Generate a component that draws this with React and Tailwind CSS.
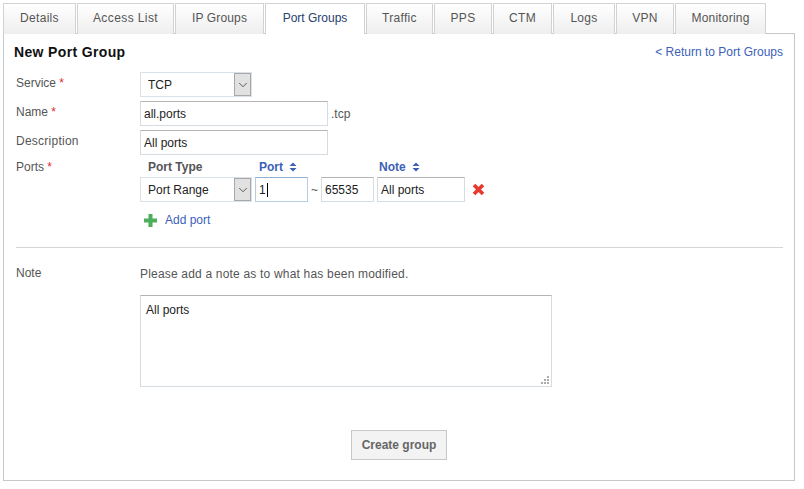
import { ChevronDown } from "lucide-react";

const tabs = [
  { label: "Details", width: "w-[73px] tracking-[0.3px]" },
  { label: "Access List", width: "w-[97px] tracking-[0.4px]" },
  { label: "IP Groups", width: "w-[89px] tracking-[0.15px]" },
  { label: "Port Groups", width: "w-[100px]", active: true },
  { label: "Traffic", width: "w-[67px] tracking-[0.3px]" },
  { label: "PPS", width: "w-[58px] tracking-[0.3px]" },
  { label: "CTM", width: "w-[59px] tracking-[0.3px]" },
  { label: "Logs", width: "w-[62px] tracking-[0.3px]" },
  { label: "VPN", width: "w-[58px] tracking-[0.3px]" },
  { label: "Monitoring", width: "w-[91px] tracking-[0.2px]" },
];

function Req() {
  return <span className="text-[#e02b2b]"> *</span>;
}

function FakeSelect({ value, width }) {
  return (
    <div className={`flex h-[25px] ${width} items-stretch border border-[#dbe1e8] bg-white`}>
      <div className="flex-1 pl-[7px] leading-[24px] text-[#222]">{value}</div>
      <div className="flex w-[17px] items-center justify-center border border-[#a8a8a8] bg-[#e1e1e1]">
        <ChevronDown size={14} strokeWidth={1.5} className="text-[#444]" />
      </div>
    </div>
  );
}

function Input({ value, width, children }) {
  return (
    <div className={`flex h-[25px] ${width} items-center border border-[#d5dce4] border-t-[#b4b4b4] bg-white pl-[3px] text-[#222]`}>
      {value}
      {children}
    </div>
  );
}

function SortHead({ label, width }) {
  return (
    <div className={`flex ${width} items-center font-bold text-[#3d5fb8]`}>
      {label}
      <svg width="8" height="10" viewBox="0 0 8 10" className="ml-[6px]">
        <path d="M4 0.5L7.5 4H0.5Z M4 9.5L0.5 6H7.5Z" fill="#3d5fb8" />
      </svg>
    </div>
  );
}

export default function App() {
  return (
    <div className="h-[489px] w-[804px] bg-white pl-[3px] pt-[3px] font-['Liberation_Sans',Arial,sans-serif] text-[12px] text-[#555]">
      <div className="flex gap-[1px]">
        {tabs.map((t) => (
          <div
            key={t.label}
            className={`-mb-[1px] flex h-[31px] items-center justify-center border border-b-0 border-[#d2d2d2] pb-[3px] ${t.width} ${
              t.active
                ? "relative z-10 bg-white text-[#27406e]"
                : "bg-gradient-to-b from-white to-[#eeeeee] text-[#555]"
            }`}
          >
            {t.label}
          </div>
        ))}
      </div>

      <div className="h-[448px] w-[792px] border border-[#c8c8c8] pl-[10px] pr-[11px]">
        <div className="flex items-center justify-between pt-[9px]">
          <h1 className="text-[14px] leading-[16px] font-bold tracking-[0.35px] text-[#111]">New Port Group</h1>
          <a className="text-[#3d5fb8]">&lt; Return to Port Groups</a>
        </div>

        <div className="mt-[11px] grid grid-cols-[124px_1fr] pl-[2px]">
          <div className="pt-[2px]">
            Service
            <Req />
          </div>
          <FakeSelect value="TCP" width="w-[112px]" />

          <div className="mt-[4px] pt-[2px]">
            Name
            <Req />
          </div>
          <div className="mt-[4px] flex items-center gap-[3px]">
            <Input value="all.ports" width="w-[188px]" />
            <span>.tcp</span>
          </div>

          <div className="mt-[4px] pt-[2px] tracking-[0.25px]">Description</div>
          <div className="mt-[4px]">
            <Input value="All ports" width="w-[188px]" />
          </div>

          <div className="mt-[4px] pt-[1px] leading-[14px]">
            Ports
            <Req />
          </div>
          <div className="mt-[4px]">
            <div className="mb-[2px] flex h-[16px] items-center pl-[8px]">
              <div className="w-[111px] font-bold text-[#555]">Port Type</div>
              <SortHead label="Port" width="w-[120px]" />
              <SortHead label="Note" />
            </div>
            <div className="flex items-center">
              <FakeSelect value="Port Range" width="w-[112px]" />
              <div className="ml-[3px] flex h-[25px] w-[53px] items-center border border-[#b9cde0] border-t-[#8fb0d0] bg-white pl-[3px] text-[#222]">
                1<span className="ml-[1px] h-[14px] w-[1px] bg-black" />
              </div>
              <span className="w-[13px] text-center">~</span>
              <Input value="65535" width="w-[53px]" />
              <div className="ml-[3px]">
                <Input value="All ports" width="w-[88px]" />
              </div>
              <svg width="13" height="13" viewBox="0 0 13 13" className="ml-[7px]">
                <path d="M2 2L11 11M11 2L2 11" stroke="#e8392f" strokeWidth="3.6" />
              </svg>
            </div>
            <div className="mt-[9px] flex items-center pl-[4px]">
              <svg width="13" height="13" viewBox="0 0 13 13">
                <path d="M4.5 0H8.5V4.5H13V8.5H8.5V13H4.5V8.5H0V4.5H4.5Z" fill="#4cae5b" />
              </svg>
              <a className="ml-[8px] text-[#3d5fb8]">Add port</a>
            </div>
          </div>
        </div>

        <div className="mt-[18px] ml-[2px] h-[1px] bg-[#d5d5d5]" />

        <div className="mt-[15px] grid grid-cols-[124px_1fr] pl-[2px]">
          <div className="pt-[1px]">Note</div>
          <div>
            <div className="pt-[4px] leading-[14px] tracking-[0.19px]">Please add a note as to what has been modified.</div>
            <div className="relative mt-[14px] h-[92px] w-[412px] border border-[#d5dce4] border-t-[#b4b4b4] pl-[5px] pt-[5px] text-[#222]">
              All ports
              <svg width="8" height="8" viewBox="0 0 8 8" className="absolute right-[2px] bottom-[2px]">
                <path d="M6 0h2v2H6zM3 3h2v2H3zM6 3h2v2H6zM0 6h2v2H0zM3 6h2v2H3zM6 6h2v2H6z" fill="#aaaaaa" />
              </svg>
            </div>
          </div>
        </div>

        <div className="mt-[43px] ml-[337px]">
          <button className="h-[30px] w-[96px] border border-[#c8c8c8] bg-[#f3f3f3] font-bold text-[#666]">
            Create group
          </button>
        </div>
      </div>
    </div>
  );
}
